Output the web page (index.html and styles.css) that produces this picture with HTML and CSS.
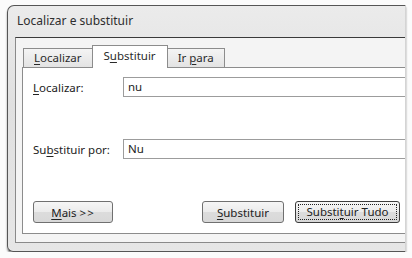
FILE: index.html
```html
<!DOCTYPE html>
<html lang="pt">
<head>
<meta charset="utf-8">
<title>Localizar e substituir</title>
<link rel="stylesheet" href="styles.css">
</head>
<body>
<div class="window">
  <div class="titlebar">Localizar e substituir</div>
  <div class="client">
    <div class="tabs">
      <div class="tab"><u>L</u>ocalizar</div>
      <div class="tab active">S<u>u</u>bstituir</div>
      <div class="tab">Ir <u>p</u>ara</div>
    </div>
    <div class="panel">
      <div class="row">
        <span class="label"><u>L</u>ocalizar:</span>
        <div class="input">nu</div>
      </div>
      <div class="row second">
        <span class="label">Su<u>b</u>stituir por:</span>
        <div class="input">Nu</div>
      </div>
      <div class="buttons">
        <button class="btn more"><u>M</u>ais <span class="arrows">&gt;&gt;</span></button>
        <div class="group">
          <button class="btn replace"><u>S</u>ubstituir</button>
          <button class="btn default"><span class="focus">Substi<u>t</u>uir Tudo</span></button>
        </div>
      </div>
    </div>
  </div>
</div>
</body>
</html>
```

FILE: styles.css
```css
* { box-sizing: border-box; }

body {
  margin: 0;
  background: #fbfbfb;
  font-family: "Noto Sans", "Open Sans", sans-serif;
  font-size: 11.5px;
  color: #222;
  overflow: hidden;
}

u { text-decoration: underline; text-underline-offset: 2px; }

.window {
  margin: 5px 0 0 7px;
  width: 399px;
  height: 247px;
  border: 1px solid #555;
  border-right-color: #d4d4d4;
  border-radius: 7px 0 0 6px;
  background: linear-gradient(#ebebeb, #e0e0e0 40%, #e6e6e6);
  padding: 0 0 8px 7px;
  display: flex;
  flex-direction: column;
  overflow: hidden;
  box-shadow: 0 2px 2px rgba(0, 0, 0, 0.45);
}

.titlebar {
  height: 31px;
  line-height: 30px;
  padding-left: 2px;
  font-size: 12px;
  color: #2e2e2e;
  flex: none;
}

.client {
  flex: 1;
  display: flex;
  flex-direction: column;
  background: #f4f4f4;
  border-top: 1px solid #3a3a3a;
  border-left: 1px solid #8a8a8a;
  border-bottom: 1px solid #8a8a8a;
  padding: 0 0 8px 6px;
  margin-right: -20px;
}

.tabs {
  display: flex;
  align-items: flex-end;
  padding-top: 7px;
  margin-left: 1px;
  height: 29px;
  flex: none;
}

.tab {
  height: 19px;
  line-height: 18px;
  padding: 0 10px;
  border: 1px solid #8c8c8c;
  border-bottom: none;
  background: linear-gradient(#f4f4f4, #e3e3e3);
  color: #2a2a2a;
}

.tab.active {
  position: relative;
  z-index: 1;
  height: 23px;
  margin: 0 -1px -1px;
  padding: 0 11px;
  line-height: 20px;
  background: #fff;
}

.panel {
  flex: 1;
  background: #fff;
  border: 1px solid #8c8c8c;
  padding: 9px 24px 9px 10px;
  display: flex;
  flex-direction: column;
}

.row {
  display: flex;
  align-items: center;
  height: 20px;
}

.row.second { margin-top: 42px; }

.label {
  width: 90px;
  flex: none;
}

.input {
  flex: 1;
  height: 20px;
  line-height: 18px;
  border: 1px solid #9c9c9c;
  padding-left: 4px;
  margin-right: -40px;
}

.buttons {
  display: flex;
  margin-top: 42px;
}

.group {
  margin-left: auto;
  display: flex;
  gap: 11px;
}

.btn {
  height: 22px;
  padding: 0;
  font: inherit;
  color: #222;
  border: 1px solid #707070;
  border-radius: 3px;
  background: linear-gradient(#f6f6f6, #ebebeb 50%, #dcdcdc 51%, #d8d8d8);
}

.arrows { letter-spacing: 1px; }

.btn.more { width: 80px; }
.btn.replace { width: 82px; }

.btn.default {
  width: 105px;
  border-color: #3c3c3c;
  padding: 2px;
}

.focus {
  display: block;
  height: 100%;
  line-height: 14px;
  border: 1px dotted #222;
  border-radius: 1px;
}
```
